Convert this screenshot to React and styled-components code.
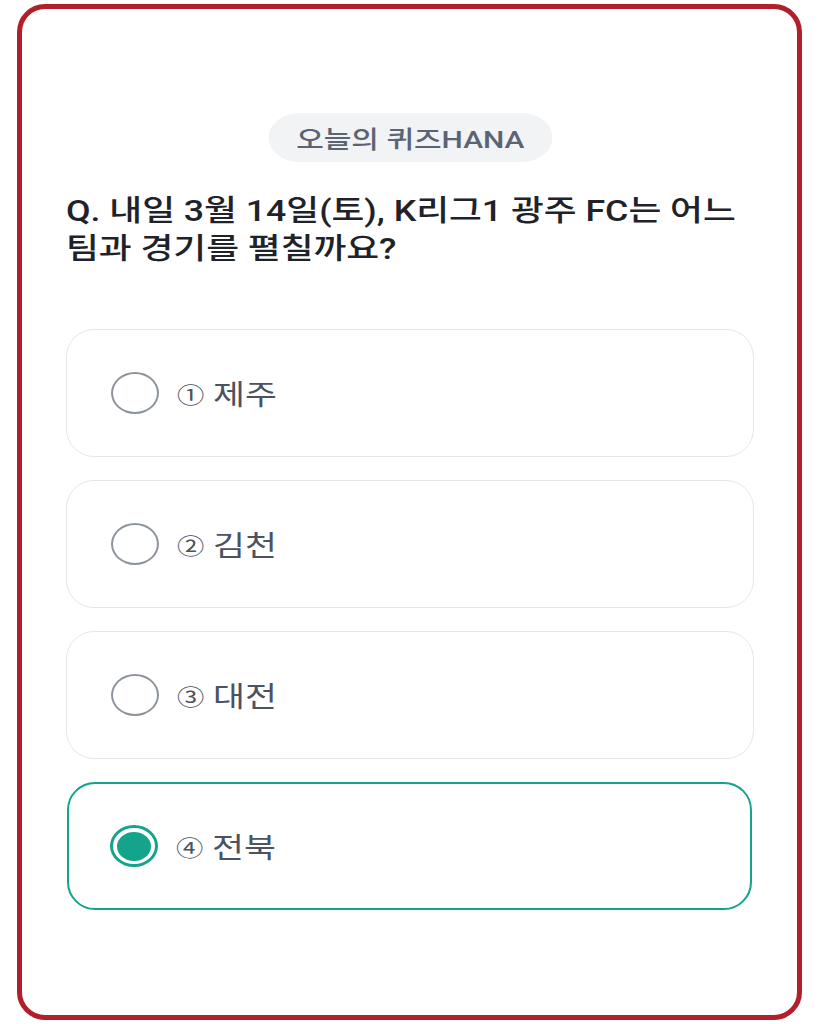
import React, { useState } from 'react'
import styled, { createGlobalStyle } from 'styled-components'

const GlobalStyle = createGlobalStyle`
  * { box-sizing: border-box; }
  html, body {
    margin: 0;
    padding: 0;
    background: #fff;
  }
  body {
    font-family: Roboto, "Noto Sans CJK KR", "Noto Sans", sans-serif;
  }
`

const Page = styled.div`
  padding: 4px 17px 4px 17px;
`

const Frame = styled.div`
  height: 1016px;
  border: 5px solid #b11f2a;
  border-radius: 28px;
  background: #fff;
  padding: 104px 43px 0 44px;
  display: flex;
  flex-direction: column;
  overflow: hidden;
`

/* the reference is drawn a bit wider than tall, so text gets a horizontal stretch */
const Badge = styled.div`
  align-self: center;
  height: 49px;
  padding: 0 22px;
  border-radius: 25px;
  background: #f1f3f5;
  color: #5b6472;
  font-size: 24px;
  font-weight: 500;
  display: flex;
  align-items: center;
  transform: scaleX(1.25);
`

const Question = styled.h1`
  align-self: flex-start;
  width: fit-content;
  margin: 30px 0 61px;
  font-size: 29px;
  line-height: 38px;
  font-weight: 500;
  color: #1f2329;
  transform: scaleX(1.23);
  transform-origin: left top;
`

const Options = styled.div`
  display: flex;
  flex-direction: column;
  gap: 23px;
`

const Option = styled.button`
  height: 128px;
  width: ${(p) => (p.selected ? 'calc(100% - 3px)' : '100%')};
  margin-left: ${(p) => (p.selected ? '1px' : '0')};
  display: flex;
  align-items: center;
  gap: 18px;
  padding: 0 0 0 ${(p) => (p.selected ? '41px' : '44px')};
  background: #fff;
  border: ${(p) => (p.selected ? '2.5px solid #14a38b' : '1px solid #e4e6ea')};
  border-radius: 28px;
  font-family: inherit;
  cursor: pointer;
  text-align: left;
`

const Radio = styled.span`
  width: 48px;
  height: 42px;
  flex: none;
  border-radius: 50%;
  border: ${(p) => (p.selected ? '3.5px solid #14a38b' : '2.5px solid #8e949c')};
  display: flex;
  align-items: center;
  justify-content: center;
`

const Dot = styled.span`
  width: 34px;
  height: 29px;
  border-radius: 50%;
  background: #14a38b;
`

const Label = styled.span`
  font-size: 28px;
  color: #4b5260;
  display: flex;
  align-items: center;
  gap: 7px;
  transform: scaleX(1.24);
  transform-origin: left center;
`

const Num = styled.span`
  font-size: 22px;
  color: #4b5260;
`

const choices = [
  { num: '①', name: '제주' },
  { num: '②', name: '김천' },
  { num: '③', name: '대전' },
  { num: '④', name: '전북' },
]

const App = () => {
  const [picked, setPicked] = useState(3)

  return (
    <Page>
      <GlobalStyle />
      <Frame>
        <Badge>오늘의 퀴즈HANA</Badge>
        <Question>
          Q. 내일 3월 14일(토), K리그1 광주 FC는 어느
          <br />
          팀과 경기를 펼칠까요?
        </Question>
        <Options>
          {choices.map((c, i) => (
            <Option key={c.num} selected={picked === i} onClick={() => setPicked(i)}>
              <Radio selected={picked === i}>{picked === i && <Dot />}</Radio>
              <Label>
                <Num>{c.num}</Num>
                {c.name}
              </Label>
            </Option>
          ))}
        </Options>
      </Frame>
    </Page>
  )
}

export default App
